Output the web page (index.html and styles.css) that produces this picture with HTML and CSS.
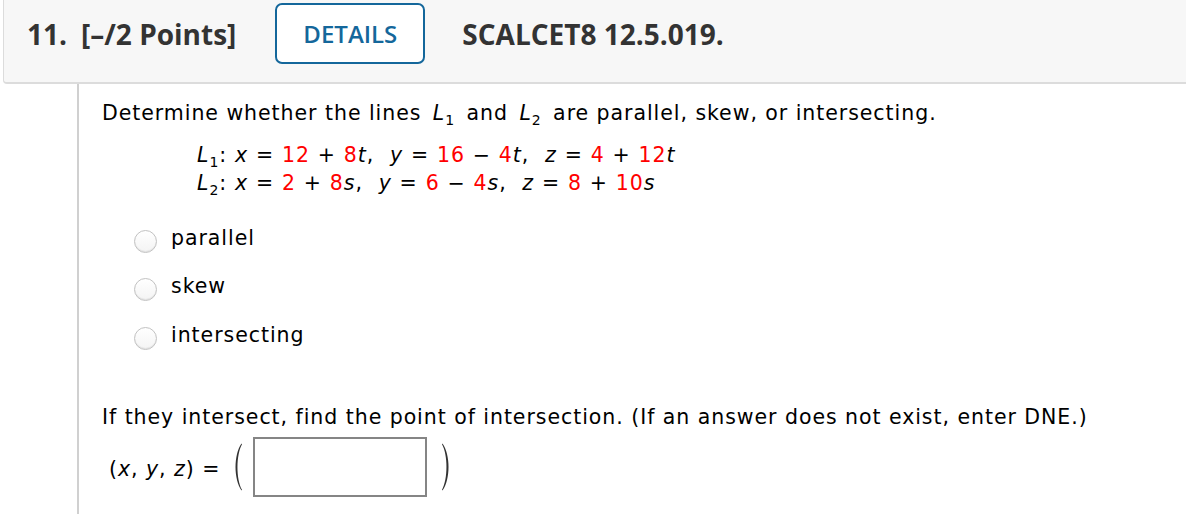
FILE: index.html
```html
<!DOCTYPE html>
<html lang="en">
<head>
<meta charset="utf-8">
<title>Question 11</title>
<link rel="stylesheet" href="styles.css">
</head>
<body>
<div class="page">
  <header class="qhead">
    <span class="qnum">11.</span>
    <span class="qpts">[–/2 Points]</span>
    <button class="details" type="button">DETAILS</button>
    <span class="qid">SCALCET8 12.5.019.</span>
  </header>
  <div class="qbody">
    <p class="prompt">Determine whether the lines <span class="m"><i>L</i><sub>1</sub></span> and <span class="m"><i>L</i><sub>2</sub></span> are parallel, skew, or intersecting.</p>
    <div class="eqs">
      <div class="eq"><i>L</i><sub>1</sub>: <i>x</i> = <span class="r">12</span> + <span class="r">8</span><i>t</i>, &nbsp;<i>y</i> = <span class="r">16</span> − <span class="r">4</span><i>t</i>, &nbsp;<i>z</i> = <span class="r">4</span> + <span class="r">12</span><i>t</i></div>
      <div class="eq"><i>L</i><sub>2</sub>: <i>x</i> = <span class="r">2</span> + <span class="r">8</span><i>s</i>, &nbsp;<i>y</i> = <span class="r">6</span> − <span class="r">4</span><i>s</i>, &nbsp;<i>z</i> = <span class="r">8</span> + <span class="r">10</span><i>s</i></div>
    </div>
    <ul class="choices">
      <li><span class="radio"></span><span class="lbl">parallel</span></li>
      <li><span class="radio"></span><span class="lbl">skew</span></li>
      <li><span class="radio"></span><span class="lbl">intersecting</span></li>
    </ul>
    <p class="prompt2">If they intersect, find the point of intersection. (If an answer does not exist, enter DNE.)</p>
    <div class="answer">
      <span class="lhs">(<i>x</i>, <i>y</i>, <i>z</i>) =</span>
      <svg class="paren" width="12" height="48" viewBox="0 0 12 48"><path d="M10.5 0.5 C2.5 12 2.5 36 10.5 47.5 L11 46.8 C5 36 5 12 11 1.2 Z" fill="#333"/></svg>
      <span class="box"></span>
      <svg class="paren close" width="12" height="48" viewBox="0 0 12 48"><path d="M1.5 0.5 C9.5 12 9.5 36 1.5 47.5 L1 46.8 C7 36 7 12 1 1.2 Z" fill="#333"/></svg>
    </div>
  </div>
</div>
</body>
</html>
```

FILE: styles.css
```css
html, body {
  margin: 0;
  padding: 0;
  background: #fff;
}

.page {
  padding-left: 3px;
  height: 514px;
  overflow: hidden;
}

.qhead {
  display: flex;
  align-items: center;
  background: #f7f7f7;
  border-left: 1px solid #dcdcdc;
  border-bottom: 2px solid #dcdcdc;
  border-bottom-left-radius: 4px;
  padding: 3px 0 18px 23px;
  margin-right: -20px;
  font-family: "Open Sans", sans-serif;
  color: #333;
}

.qnum,
.qpts,
.qid {
  font-size: 28px;
  font-weight: 700;
  line-height: 38px;
}

.qnum {
  margin-right: 14px;
}

.qpts {
  margin-right: 39px;
}

.details {
  box-sizing: border-box;
  width: 150px;
  height: 61px;
  border: 2px solid #14679b;
  border-radius: 7px;
  background: #fff;
  color: #14679b;
  font-family: "Open Sans", sans-serif;
  font-size: 24px;
  font-weight: 600;
  padding: 0;
  margin-right: 37px;
}

.qbody {
  margin-left: 74px;
  border-left: 2px solid #d0d0d0;
  padding: 17px 0 40px 23px;
  font-family: "DejaVu Sans", Verdana, sans-serif;
  font-size: 20.5px;
  letter-spacing: 0.95px;
  color: #000;
}

.prompt,
.prompt2 {
  margin: 0;
  line-height: 24px;
}

.m {
  padding: 0 4px;
}

i {
  font-style: italic;
}

sub {
  font-size: 14px;
  vertical-align: -5px;
  line-height: 0;
}

.eqs {
  margin: 16px 0 0 95px;
  line-height: 28.4px;
}

.eq {
  word-spacing: 0.4px;
}

.r {
  color: #f00;
}

.choices {
  list-style: none;
  margin: 28px 0 0 0;
  padding: 0 0 0 32px;
  display: flex;
  flex-direction: column;
  gap: 21.6px;
}

.choices li {
  display: flex;
  align-items: flex-start;
  line-height: 24px;
}

.radio {
  box-sizing: border-box;
  width: 23px;
  height: 23px;
  margin-top: 4px;
  margin-right: 14px;
  border-radius: 50%;
  border: 1px solid #c2c2c2;
  background: linear-gradient(#ffffff, #f4f4f4);
  box-shadow: inset 0 -1px 1px rgba(0, 0, 0, 0.08);
}

.prompt2 {
  margin-top: 55px;
}

.answer {
  display: flex;
  align-items: center;
  margin-top: 8px;
  padding-left: 7px;
}

.lhs {
  line-height: 24px;
  margin-top: 4px;
  margin-right: 11px;
}

.paren {
  display: block;
}

.box {
  box-sizing: border-box;
  width: 174px;
  height: 60px;
  border: 2px solid #858585;
  background: #fff;
  margin: 0 14px 0 10px;
}
```
